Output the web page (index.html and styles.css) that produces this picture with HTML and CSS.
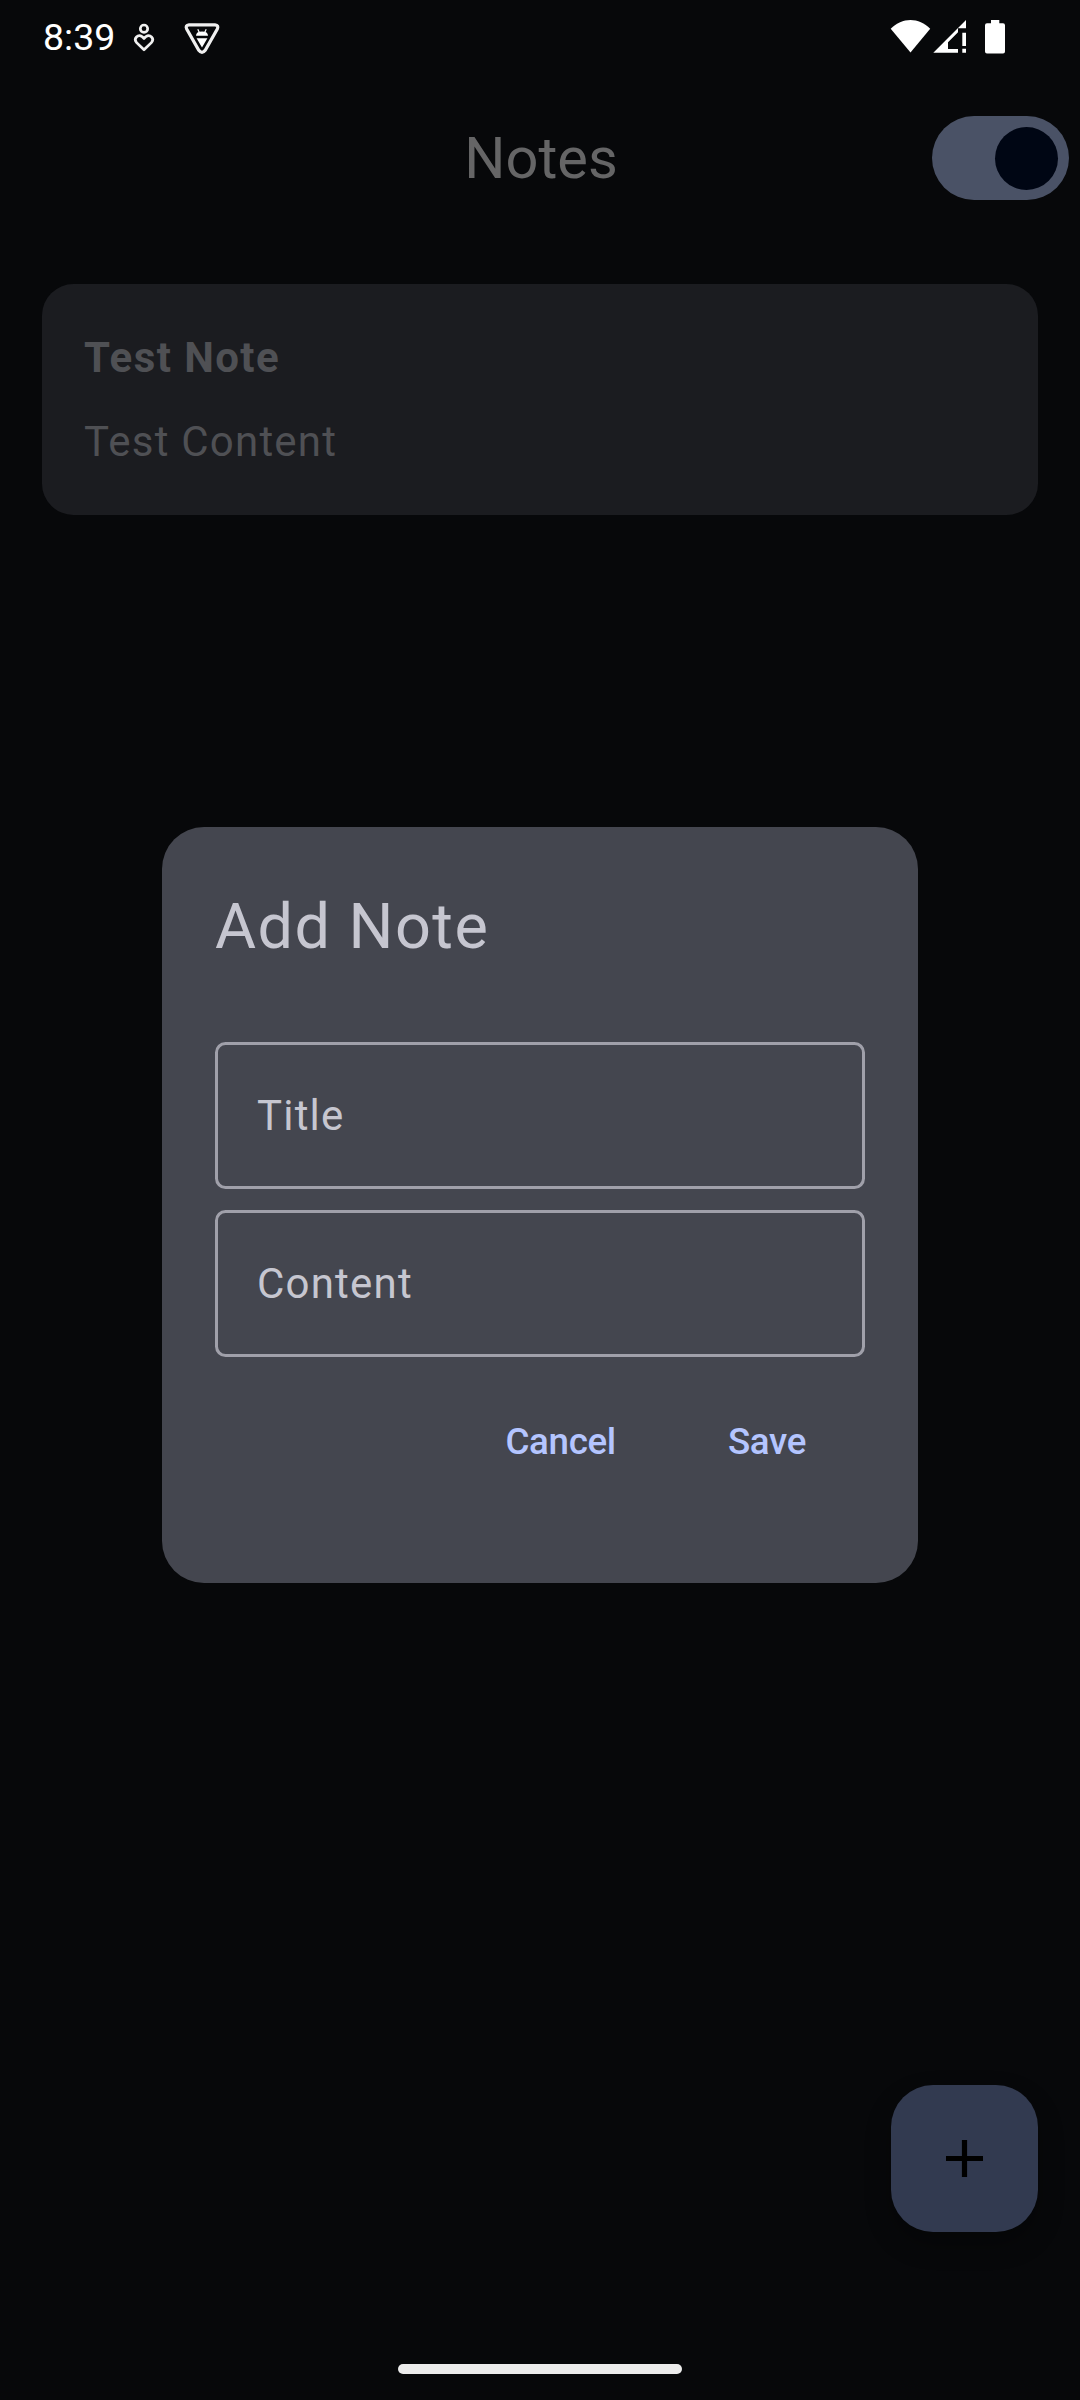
FILE: index.html
```
<!DOCTYPE html>
<html lang="en">
<head>
<meta charset="utf-8">
<title>Notes</title>
<link rel="stylesheet" href="styles.css">
</head>
<body>
<div class="screen">
  <header class="status">
    <div class="status-left">
      <span class="clock">8:39</span>
      <svg class="icon-heart" width="24" height="34" viewBox="0 0 24 34" fill="none" stroke="#f0f0f0" stroke-width="2.7">
        <circle cx="12" cy="8.7" r="3.7"/>
        <path d="M12 29.800 L4.600 22.600 C1 18.600 6 13.800 10 16.600 L12 18.500 L14 16.600 C18 13.800 23 18.600 19.400 22.600 Z" stroke-linejoin="round"/>
      </svg>
      <svg class="icon-shield" width="38" height="36" viewBox="0 0 38 36" fill="none">
        <path d="M6 4.800 H32 Q36 5.200 34.300 9 L22.200 30.300 Q19 34.500 15.800 30.300 L3.700 9 Q2 5.200 6 4.800 Z" stroke="#f0f0f0" stroke-width="3.200"/>
        <path d="M13 15.700 C13 12.800 15 11.400 19 11.400 S25 12.800 25 15.700 Z M13.600 18.200 H24.400 L19 27.500 Z" fill="#fff"/>
        <path d="M14.800 9.300 L16.200 12.300 M23.200 9.300 L21.800 12.300" stroke="#fff" stroke-width="1.200"/>
      </svg>
    </div>
    <svg class="icon-system" width="116" height="36" viewBox="0 0 116 36" fill="#fff">
      <path d="M0.700 9.700 C12 -1.900 29 -1.900 40.200 9.700 L20.500 33.500 Z"/>
      <path d="M43.300 33.800 L76 1 V9.300 H68 V13.300 L58 23.300 V30 H68 V33.800 Z M72.300 13.800 H76 V27 H72.300 Z M72.300 29.700 H76 V33.800 H72.300 Z"/>
      <path d="M101 1 H109.300 V4.200 H113 Q115 4.200 115 6.200 V32.500 Q115 34.500 113 34.500 H97 Q95 34.500 95 32.500 V6.200 Q95 4.200 97 4.200 H101 Z"/>
    </svg>
  </header>
  <div class="appbar">
    <h1 class="appbar-title">Notes</h1>
    <div class="switch"><div class="thumb"></div></div>
  </div>
  <main class="content">
    <article class="note">
      <h2 class="note-title">Test Note</h2>
      <p class="note-text">Test Content</p>
    </article>
  </main>
  <div class="fab-row">
    <div class="fab">
      <svg width="37" height="37" viewBox="0 0 37 37"><path d="M15.900 0 H21.100 V15.900 H37 V21.100 H21.100 V37 H15.900 V21.100 H0 V15.900 H15.900 Z"/></svg>
    </div>
  </div>
  <footer class="nav"><div class="handle"></div></footer>

  <section class="dialog">
    <h2 class="dialog-title">Add Note</h2>
    <div class="fields">
      <div class="field">Title</div>
      <div class="field">Content</div>
    </div>
    <div class="actions">
      <span class="action">Cancel</span>
      <span class="action">Save</span>
    </div>
  </section>
</div>
</body>
</html>
```
FILE: styles.css
```
* { box-sizing: border-box; }
body { margin: 0; background: #07080a; }
h1, h2, p { margin: 0; font-weight: 400; }
svg { display: block; }
.screen {
  position: relative;
  width: 1080px;
  height: 2400px;
  display: flex;
  flex-direction: column;
  background: #07080a;
  font-family: Roboto, "Liberation Sans", sans-serif;
}
.status {
  height: 74px;
  display: flex;
  justify-content: space-between;
  padding: 0 74px 0 43px;
  color: #fff;
}
.status-left { display: flex; }
.clock { width: 89px; font-size: 37.500px; line-height: 74px; }
.icon-heart { margin-top: 20px; }
.icon-shield { margin: 20px 0 0 27px; }
.icon-system { margin-top: 19px; }
.appbar {
  height: 168px;
  display: grid;
  grid-template-columns: 1fr auto 1fr;
  align-items: center;
  padding: 0 11px 0 0;
}
.appbar-title {
  grid-column: 2;
  margin-left: 13px;
  font-size: 57.750px;
  line-height: 74px;
  color: #656566;
}
.switch {
  justify-self: end;
  display: flex;
  justify-content: flex-end;
  align-items: center;
  width: 137px;
  height: 84px;
  padding-right: 11px;
  border-radius: 42px;
  background: #4a5266;
}
.thumb { width: 63px; height: 63px; border-radius: 50%; background: #000614; }
.content { flex: 1; padding: 42px; }
.note {
  display: flex;
  flex-direction: column;
  gap: 21px;
  padding: 42px;
  border-radius: 31.500px;
  background: #1b1c20;
  color: #4f5054;
  font-size: 42px;
  line-height: 63px;
  letter-spacing: 1.220px;
}
.note-title { font-size: inherit; font-weight: 700; letter-spacing: 1.420px; }
.fab-row { display: flex; justify-content: flex-end; padding: 0 42px 42px; }
.fab {
  display: flex;
  align-items: center;
  justify-content: center;
  width: 147px;
  height: 147px;
  border-radius: 42px;
  background: #323a50;
  box-shadow: 0 12px 26px rgba(0, 0, 0, .3);
}
.nav { height: 126px; display: flex; justify-content: center; padding-top: 90px; }
.handle { width: 284px; height: 10px; border-radius: 5px; background: #ececec; }
.dialog {
  position: absolute;
  left: 162px;
  top: 827px;
  width: 756px;
  height: 756px;
  padding: 53px;
  border-radius: 42px;
  background: #44464f;
  color: #c6c6d0;
}
.dialog-title {
  height: 162px;
  font-size: 63px;
  line-height: 94px;
  letter-spacing: 1.450px;
}
.fields { display: flex; flex-direction: column; gap: 21px; }
.field {
  display: flex;
  align-items: center;
  height: 147px;
  padding-left: 39px;
  border: 3px solid #a0a0aa;
  border-radius: 10.500px;
  font-size: 42px;
  letter-spacing: 1.200px;
}
.actions { display: flex; justify-content: flex-end; margin-top: 32px; padding-right: 27px; gap: 48px; }
.action {
  height: 105px;
  padding: 0 32px;
  line-height: 105px;
  font-size: 36.750px;
  font-weight: 500;
  letter-spacing: -.340px;
  color: #b4c5ff;
}
```
